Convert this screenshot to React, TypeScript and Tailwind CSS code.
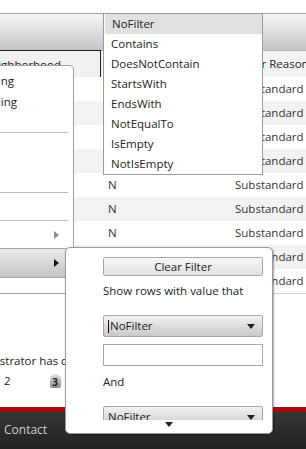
import React from "react";

const OPERATORS = [
  "NoFilter",
  "Contains",
  "DoesNotContain",
  "StartsWith",
  "EndsWith",
  "NotEqualTo",
  "IsEmpty",
  "NotIsEmpty",
];

const ROWS = Array.from({ length: 9 }, (_, i) => i);

function Caret({ className = "" }: { className?: string }) {
  return (
    <svg width="8" height="5" viewBox="0 0 8 5" className={className}>
      <path d="M0 0h8L4 5z" fill="#222" />
    </svg>
  );
}

function SubArrow({ color }: { color: string }) {
  return (
    <svg width="5" height="8" viewBox="0 0 5 8">
      <path d="M0 0l5 4-5 4z" fill={color} />
    </svg>
  );
}

// text clipped on the left edge of the page: only its tail shows
function Tail({ text, end, className = "" }: { text: string; end: string; className?: string }) {
  return (
    <div className={`flex shrink-0 justify-end ${end}`}>
      <span className={`whitespace-nowrap ${className}`}>{text}</span>
    </div>
  );
}

function Select({ clipped = false }: { clipped?: boolean }) {
  return (
    <div className="flex h-[22px] w-[160px] shrink-0 items-center justify-between rounded-[2px] border border-[#a8a8a8] bg-gradient-to-b from-[#f2f2f2] to-[#c9c9c9] pl-[4px] pr-[7px]">
      <span className="flex items-center">
        {!clipped && <span className="mr-[1px] h-[13px] w-px bg-[#111]" />}
        <span>NoFilter</span>
      </span>
      <Caret />
    </div>
  );
}

export default function App() {
  return (
    <div className="relative h-[449px] w-[306px] overflow-hidden bg-white font-['Open_Sans',sans-serif] text-[11.5px] leading-4 text-[#222]">
      {/* grid */}
      <div className="h-[13px]" />
      <div className="h-[37px] border-t border-[#a3a3a3] bg-gradient-to-b from-[#f6f6f6] to-[#c5c5c5]" />
      <div className="flex h-[27px]">
        <div className="w-[101px] shrink-0 overflow-hidden border-t border-r border-[#1e1e1e] bg-[#f1f1f1] pt-[6px]">
          <Tail text="Neighborhood" end="w-[61px]" className="underline" />
        </div>
        <div className="w-[134px] shrink-0 border-t border-[#b5b5b5] bg-[#f3f3f3]" />
        <div className="min-w-0 flex-1 overflow-hidden whitespace-nowrap border-t border-[#b5b5b5] bg-[#f3f3f3] pt-[5px]">
          Other Reason
        </div>
      </div>
      {ROWS.map((i) => (
        <div
          key={i}
          className={`flex h-[24px] items-center text-[#333] ${i % 2 === 1 ? "bg-[#f2f2f2]" : "bg-white"}`}
        >
          <div className="w-[101px] shrink-0" />
          <div className="w-[134px] shrink-0 pl-[7px]">N</div>
          <div className="min-w-0 flex-1 overflow-hidden whitespace-nowrap">Substandard Housing</div>
        </div>
      ))}
      <div className="h-[112px] border-t border-[#d0d0d0]">
        <div className="mt-[59px] whitespace-nowrap">
          <span className="-ml-[38px]">Administrator has commented</span>
        </div>
        <div className="mt-[4px] flex items-center pl-[4px]">
          <span>2</span>
          <span className="ml-[39px] flex h-[14px] w-[11px] items-end justify-center rounded-t-[5px] rounded-b-[2px] bg-gradient-to-b from-[#e2e2e2] to-[#8e8e8e] text-[10px] font-bold leading-[12px] text-[#222]">
            3
          </span>
        </div>
      </div>
      <div className="h-[2px] bg-white" />
      <div className="h-[5px] bg-[#a60e0e]" />
      <div className="h-[37px] bg-gradient-to-b from-[#353535] to-[#222] pl-[4px] pt-[10px] text-[12px] text-[#cfcfcf]">
        Contact
      </div>

      {/* column context menu */}
      <div className="absolute left-0 top-[65px] flex h-[229px] w-[74px] flex-col rounded-tr-[5px] border border-l-0 border-[#a0a0a0] bg-white">
        <div className="flex h-[24px] items-end pb-[1px]">
          <Tail text="Sort Ascending" end="w-[14px]" />
        </div>
        <div className="flex h-[23px] items-center">
          <Tail text="Sort Descending" end="w-[17px]" />
        </div>
        <div className="h-[19px]" />
        <div className="mr-[5px] h-px bg-[#bdbdbd]" />
        <div className="h-[59px]" />
        <div className="mr-[5px] h-px bg-[#bdbdbd]" />
        <div className="h-[27px]" />
        <div className="mr-[5px] h-px bg-[#bdbdbd]" />
        <div className="flex h-[27px] items-center justify-end pr-[14px]">
          <SubArrow color="#8a8a8a" />
        </div>
        <div className="h-px bg-[#a8a8a8]" />
        <div className="flex h-[28px] items-center justify-end bg-gradient-to-b from-[#ebebeb] to-[#c3c3c3] pr-[14px]">
          <SubArrow color="#111" />
        </div>
        <div className="h-px bg-[#a8a8a8]" />
        <div className="flex-1" />
      </div>

      {/* filter operator list */}
      <div className="absolute left-[103px] top-[13px] w-[160px] border border-[#9c9c9c] bg-white">
        {OPERATORS.map((op, i) => (
          <div
            key={op}
            className={`flex h-[20px] items-center pl-[7px] ${i === 0 ? "ml-px bg-[#e0e0e0]" : ""}`}
          >
            {op}
          </div>
        ))}
      </div>

      {/* filter panel */}
      <div className="absolute left-[65px] top-[247px] flex h-[187px] w-[208px] flex-col rounded-[5px] border border-[#9a9a9a] bg-white shadow-[1px_1px_2px_rgba(0,0,0,0.35)]">
        <div className="flex h-[172px] flex-col overflow-hidden pl-[37px]">
          <div className="mt-[9px] flex h-[19px] w-[160px] shrink-0 items-center justify-center rounded-[2px] border border-[#a8a8a8] bg-gradient-to-b from-[#f8f8f8] to-[#e1e1e1]">
            Clear Filter
          </div>
          <div className="mt-[7px]">Show rows with value that</div>
          <div className="mt-[16px]">
            <Select />
          </div>
          <div className="mt-[7px] h-[22px] w-[160px] shrink-0 border border-[#a8a8a8] bg-white" />
          <div className="mt-[8px]">And</div>
          <div className="mt-[16px]">
            <Select clipped />
          </div>
        </div>
        <div className="flex flex-1 justify-center pt-[2px]">
          <Caret />
        </div>
      </div>
    </div>
  );
}
